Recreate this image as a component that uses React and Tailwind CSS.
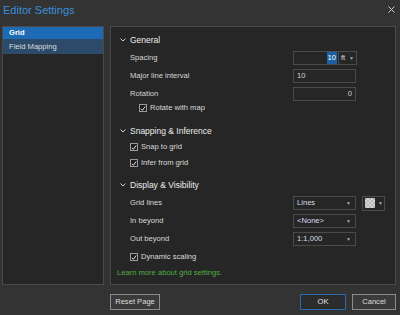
import React from 'react';

const font = { fontFamily: '"Liberation Sans", Arial, sans-serif' };

function Chevron() {
    return (
        <svg width="6" height="4" viewBox="0 0 6 4" className="mr-[4px]">
            <path d="M0.5 0.5 L3 3 L5.5 0.5" fill="none" stroke="#cfcfcf" strokeWidth="1" />
        </svg>
    );
}

function Caret() {
    return <span className="text-[5px] leading-none text-[#a8a8a8]">▼</span>;
}

function Check() {
    return (
        <span className="flex h-[8px] w-[8px] items-center justify-center border border-[#9a9a9a] bg-[#1d1d1d]">
            <svg width="7" height="7" viewBox="0 0 7 7">
                <path d="M1 3.8 L2.8 5.6 L6 1.2" fill="none" stroke="#f2f2f2" strokeWidth="1.1" />
            </svg>
        </span>
    );
}

function Header({ label, className }) {
    return (
        <div className={`flex h-[14px] items-center pl-[9px] text-[8.5px] text-[#ececec] ${className}`}>
            <Chevron />
            {label}
        </div>
    );
}

function Row({ label, children, className }) {
    return (
        <div className={`flex h-[14px] items-center ${className}`}>
            <span className="w-[182px] pl-[19px] text-[7.6px] text-[#d8d8d8]">{label}</span>
            {children}
        </div>
    );
}

function CheckRow({ label, indent, className }) {
    return (
        <div className={`flex h-[14px] items-center gap-[3px] text-[7.6px] text-[#dcdcdc] ${indent} ${className}`}>
            <Check />
            {label}
        </div>
    );
}

function Select({ value }) {
    return (
        <div className="flex h-[14px] w-[63px] items-center justify-between border border-[#4a4a4a] bg-[#262626] pl-[3px] pr-[4px] text-[7.6px] text-[#d6dbe6]">
            <span>{value}</span>
            <Caret />
        </div>
    );
}

export default function App() {
    return (
        <div style={font} className="flex h-[315px] w-[400px] flex-col overflow-hidden bg-[#333333]">
            {/* Title bar */}
            <div className="flex h-[25px] items-start justify-between pl-[3px] pr-[5px] pt-[3px]">
                <span className="text-[11px] leading-[14px] text-[#3a8fdc]">Editor Settings</span>
                <svg width="7" height="7" viewBox="0 0 7 7" className="mt-[3px]">
                    <path d="M0.5 0.5 L6.5 6.5 M6.5 0.5 L0.5 6.5" stroke="#c8c8c8" strokeWidth="1" />
                </svg>
            </div>

            <div className="flex h-[260px] gap-[6px] pl-[2px] pt-[1px]">
                {/* Left nav */}
                <div className="flex w-[102px] flex-col border border-[#4a4a4a] bg-[#262626]">
                    <div className="flex h-[12px] items-center bg-[#1d6ab5] pl-[6px] text-[7.6px] font-bold text-white">
                        Grid
                    </div>
                    <div className="flex h-[15px] items-center bg-[#2c4b6b] pl-[6px] text-[7.6px] text-[#dcdcdc]">
                        Field Mapping
                    </div>
                </div>

                {/* Settings panel */}
                <div className="flex w-[286px] flex-col border border-[#4a4a4a] bg-[#262626]">
                    <Header label="General" className="mt-[6px]" />
                    <Row label="Spacing" className="mt-[4px]">
                        <div className="flex h-[14px] border border-[#4a4a4a] text-[7.6px]">
                            <div className="flex w-[45px] items-center justify-end border-r border-[#4a4a4a] pr-[1px]">
                                <span className="bg-[#1c5fa3] px-[1px] text-white">10</span>
                            </div>
                            <div className="flex w-[17px] items-center justify-between px-[2px] text-[#d6dbe6]">
                                <span>ft</span>
                                <Caret />
                            </div>
                        </div>
                    </Row>
                    <Row label="Major line interval" className="mt-[4px]">
                        <div className="flex h-[14px] w-[63px] items-center border border-[#4a4a4a] px-[3px] text-[7.6px] text-[#d6d6d6]">
                            10
                        </div>
                    </Row>
                    <Row label="Rotation" className="mt-[4px]">
                        <div className="flex h-[14px] w-[63px] items-center justify-end border border-[#4a4a4a] px-[3px] text-[7.6px] text-[#d6d6d6]">
                            0
                        </div>
                    </Row>
                    <CheckRow label="Rotate with map" indent="pl-[28px]" />

                    <Header label="Snapping & Inference" className="mt-[9px]" />
                    <CheckRow label="Snap to grid" indent="pl-[19px]" className="mt-[2px]" />
                    <CheckRow label="Infer from grid" indent="pl-[19px]" className="mt-[2px]" />

                    <Header label="Display & Visibility" className="mt-[8px]" />
                    <Row label="Grid lines" className="mt-[4px]">
                        <Select value="Lines" />
                        <div className="ml-[6px] flex h-[15px] w-[23px] items-center gap-[3px] border border-[#4a4a4a] pl-[2px]">
                            <div className="h-[10px] w-[10px] bg-[#c9c9c9] bg-[repeating-conic-gradient(#d4d4d4_0_25%,#b8b8b8_0_50%)] bg-[length:4px_4px]" />
                            <Caret />
                        </div>
                    </Row>
                    <Row label="In beyond" className="mt-[4px]">
                        <Select value="<None>" />
                    </Row>
                    <Row label="Out beyond" className="mt-[4px]">
                        <Select value="1:1,000" />
                    </Row>
                    <CheckRow label="Dynamic scaling" indent="pl-[19px]" className="mt-[4px]" />
                    <div className="mt-[2px] flex h-[14px] items-center pl-[6px] text-[7.6px] text-[#4fae44]">
                        Learn more about grid settings.
                    </div>
                </div>
            </div>

            {/* Footer */}
            <div className="flex items-start pt-[9px]">
                <button className="ml-[110px] flex h-[16px] w-[50px] items-center justify-center border border-[#8c8c8c] bg-[#3a3a3a] text-[7.6px] text-[#dedede]">
                    Reset Page
                </button>
                <button className="ml-[140px] flex h-[16px] w-[46px] items-center justify-center border border-[#2a6bb0] bg-[#2c2c2c] text-[7.6px] text-[#e0e0e0]">
                    OK
                </button>
                <button className="ml-[6px] flex h-[16px] w-[44px] items-center justify-center border border-[#8c8c8c] bg-[#3a3a3a] text-[7.6px] text-[#dedede]">
                    Cancel
                </button>
            </div>
        </div>
    );
}
